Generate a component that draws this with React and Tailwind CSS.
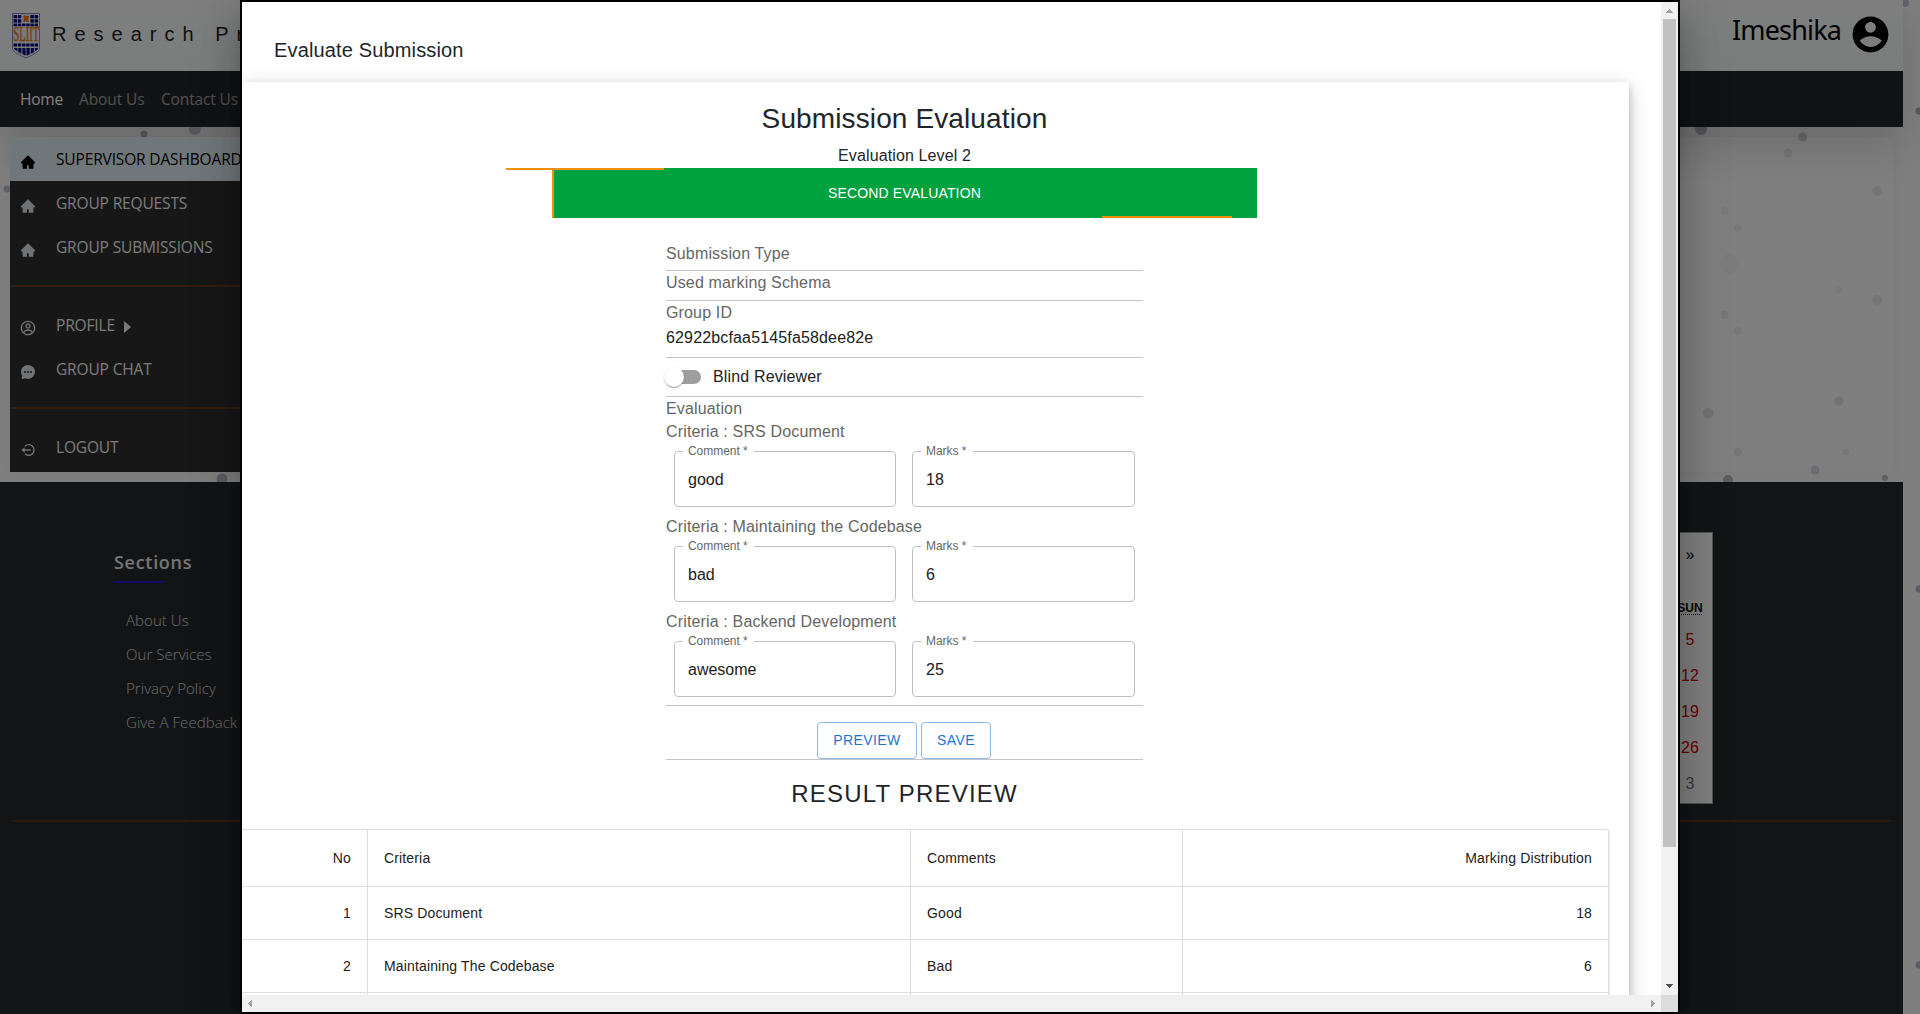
import React from 'react';
import { AiFillHome } from 'react-icons/ai';
import { IoChatbubbleEllipses } from 'react-icons/io5';
import { CgProfile } from 'react-icons/cg';
import { BiLogOutCircle } from 'react-icons/bi';
import { RiAccountCircleFill } from 'react-icons/ri';

const SEGOE = 'font-["Open_Sans",sans-serif]';

function Logo() {
  const top = [0, 1, 2];
  return (
    <svg width="28" height="46" viewBox="0 0 28 46" aria-hidden="true">
      <path d="M.5.5h27V35.5C27.500 39 20 42 14 45C8 42 .5 39 .5 35.500Z" fill="#f4f4ff" stroke="#8a8ac0" />
      {top.map((r) =>
        [0, 1, 2, 3, 4, 5].map((c) =>
          r < 2 && (c === 2 || c === 3) ? null : (
            <rect key={`${r}-${c}`} x={1.6 + c * 4.2} y={2 + r * 4.3} width="3.400" height={r === 2 ? 2.6 : 3.3} fill="#00007c" />
          )
        )
      )}
      <path d="M11 3l2-1 1 1h3v2l-1 1 1 3h-2l-1-1-2 1-1-1 1-2z" fill="#f07808" />
      <text x="2.500" y="28.500" transform="scale(0.530 1)" fill="#ee7a10" stroke="#ee7a10" strokeWidth="0.500" className="font-['Liberation_Serif',serif] text-[20px]">
        SLIIT
      </text>
      {[0, 1, 2, 3, 4, 5].map((c) => (
        <rect key={c} x={1.6 + c * 4.2} y="30.500" width="3.400" height="3" fill="#00007c" />
      ))}
      <path d="M2 35h3.400v3.300L2 36zM6.200 35h3.200v5.500l-3.200-1.600zM10.400 35h3.200v7.500l-3.200-1.500zM14.500 35h3.200v6.200l-3.200 1.500zM18.700 35h3.200v4.200l-3.200 1.600zM22.800 35H26v1.300l-3.200 2.200z" fill="#00007c" />
    </svg>
  );
}

function SideItem({ icon, label, active, children }) {
  return (
    <div className={`flex h-11 items-center ${active ? 'bg-[#e0eef4] text-black' : 'text-[#f5f5f5]'}`}>
      <span className={`mt-[5px] ml-[10px] flex w-4 justify-center text-[16px] ${active ? 'text-black' : 'text-[#e0e6ec]'}`}>{icon}</span>
      <span className="ml-5 text-[15.500px] leading-[22px] tracking-[-0.15px] whitespace-nowrap">{label}</span>
      {children}
    </div>
  );
}

function SideRule() {
  return <div className="my-4 h-[2px] bg-[#603a20]" />;
}

const DOTS = [
  [144, 134, 3.5, 0.4], [195, 129, 6, 0.28], [7, 189, 3.5, 0.3], [222, 479, 5.5, 0.35],
  [1701, 129, 6, 0.35], [1802.500, 137, 4.5, 0.22], [1788, 153, 4.5, 0.1], [1877, 191, 5, 0.1],
  [1724.500, 211, 4, 0.08], [1738, 228, 4, 0.08], [1729, 264, 10, 0.03], [1839, 290, 3.5, 0.05], [1877, 300, 5, 0.1],
  [1724.500, 315, 4, 0.09], [1738, 331, 4, 0.08], [1839, 401, 4.5, 0.12], [1708, 413, 5.5, 0.12],
  [1738, 452, 4, 0.1], [1845.500, 452, 3.5, 0.08], [1728, 480, 5, 0.35], [1815, 470, 4.5, 0.18],
  [1885, 478, 3, 0.3], [1905, 3, 4, 0.3], [1919, 111, 3.5, 0.4], [1919, 589, 3.5, 0.35], [1919, 965, 3.5, 0.35],
];

function BackgroundPage() {
  return (
    <div className={`relative flex h-[1014px] w-[1920px] overflow-hidden bg-white ${SEGOE}`}>
      <svg className="absolute inset-0" width="1920" height="1014" aria-hidden="true">
        {DOTS.map(([x, y, r, o]) => (
          <circle key={`${x}-${y}`} cx={x} cy={y} r={r} fill="#3c3c68" fillOpacity={o} />
        ))}
      </svg>
      <div className="relative flex w-[1903px] shrink-0 flex-col">
        <div className="shadow-[0_16px_48px_rgba(0,0,0,0.175)]">
          <header className="flex h-[71px] bg-linear-to-b from-[#fdfdfd] to-[#f6fafa]">
            <div className="mt-[13px] ml-3 shrink-0"><Logo /></div>
            <div className="ml-[12px] pt-[19px] font-['Liberation_Sans',sans-serif] text-[20px] leading-[30px] tracking-[8px] whitespace-nowrap text-[#212529]">
              Research Project
            </div>
            <div className="mr-[11px] ml-auto flex">
              <span className="mt-[10px] font-['Noto_Sans',sans-serif] text-[27px] leading-[40px] tracking-[-0.850px] text-black">Imeshika</span>
              <RiAccountCircleFill className="mt-[13px] ml-[8px] size-[43px] text-black" />
            </div>
          </header>
          <nav className="flex h-14 items-center bg-[#212529] pt-[2px] pl-5 text-[15.500px] text-white/55">
            <span className="w-[59px] tracking-[-0.2px] text-white">Home</span>
            <span className="w-[82px] tracking-[-0.1px]">About Us</span>
            <span className="tracking-[-0.150px]">Contact Us</span>
          </nav>
        </div>
        <main className="h-[355px] p-[10px]">
          <div className="h-[335px] shadow-[0_0_16px_rgba(0,0,0,0.06)]">
            <aside className="h-full w-[300px] bg-[#2f2f2f]">
              <SideItem active icon={<AiFillHome />} label="SUPERVISOR DASHBOARD" />
              <SideItem icon={<AiFillHome />} label="GROUP REQUESTS" />
              <SideItem icon={<AiFillHome />} label="GROUP SUBMISSIONS" />
              <SideRule />
              <SideItem icon={<CgProfile />} label="PROFILE">
                <span className="mt-[3px] ml-[9px] border-y-[6px] border-l-[7px] border-y-transparent border-l-[#f5f5f5]" />
              </SideItem>
              <SideItem icon={<IoChatbubbleEllipses />} label="GROUP CHAT" />
              <SideRule />
              <SideItem icon={<BiLogOutCircle />} label="LOGOUT" />
            </aside>
          </div>
        </main>
        <footer className="flex grow flex-col bg-[#24282b] px-3">
          <div className="flex h-[338px] justify-between">
            <div className="pt-[67px] pl-[102px]">
              <h6 className="text-[18px] leading-[26px] font-semibold tracking-[0.7px] text-white/90">Sections</h6>
              <div className="mt-[6px] h-[2px] w-[50px] bg-[#2814d2]" />
              <ul className="mt-5 ml-3 text-[15px] leading-[34px] font-light tracking-[0.050px] text-white/80">
                <li>About Us</li>
                <li>Our Services</li>
                <li>Privacy Policy</li>
                <li>Give A Feedback</li>
              </ul>
            </div>
            <div className="mt-[50px] mr-[178px] flex h-[272px] w-[350px] justify-end border border-[#a0a096] bg-white font-['Liberation_Sans',sans-serif] text-black">
              <div className="flex w-[44px] flex-col text-center text-[16px] leading-9">
                <span className="h-11 leading-11">»</span>
                <span className="mt-[13px] h-8 text-[12px] leading-9 font-bold text-[#111]">
                  <span className="-mx-1 underline decoration-dotted underline-offset-2">SUN</span>
                </span>
                <span className="text-[#d10000]">5</span>
                <span className="text-[#d10000]">12</span>
                <span className="text-[#d10000]">19</span>
                <span className="text-[#d10000]">26</span>
                <span className="text-[#757575]">3</span>
              </div>
            </div>
          </div>
          <div className="h-[2px] bg-[#5c3620]" />
        </footer>
      </div>
      <div className="absolute inset-0 bg-black/50" />
    </div>
  );
}

function Field({ label, value, notch, width }) {
  return (
    <div className={`relative h-14 rounded-[4px] border border-[#c0c0c0] pl-[13px] ${width}`}>
      <span className={`absolute top-[-8px] left-[8px] bg-white pl-[5px] text-[12px] leading-[14px] tracking-[-0.050px] whitespace-nowrap text-[#666] ${notch}`}>{label}</span>
      <span className="block pt-[16px] text-[16px] leading-[24px] text-[#212121]">{value}</span>
    </div>
  );
}

function Criterion({ name, comment, marks }) {
  return (
    <div className="pb-2">
      <p className="leading-[23px] text-[#666]">Criteria : {name}</p>
      <div className="mt-2 flex gap-4 px-2 tracking-normal">
        <Field label="Comment *" value={comment} notch="w-[71px]" width="w-[222px]" />
        <Field label="Marks *" value={marks} notch="w-[52px]" width="w-[223px]" />
      </div>
    </div>
  );
}

const ROWS = [
  ['1', 'SRS Document', 'Good', '18'],
  ['2', 'Maintaining The Codebase', 'Bad', '6'],
  ['', '', '', ''],
];

function ResultRow({ cells, height }) {
  return (
    <div className={`grid grid-cols-[126px_543px_272px_426px] border-b border-[#dedede] ${height}`}>
      {cells.map((cell, i) => (
        <div key={i} className={`flex items-center border-r border-[#dedede] px-4 ${i === 0 || i === 3 ? 'justify-end' : ''}`}>
          {cell}
        </div>
      ))}
    </div>
  );
}

function Form() {
  return (
    <div className="mx-auto w-[477px] text-[16px] tracking-[0.150px] text-[#666]">
      <div className="h-[53px] border-b border-[#c4c4c4] pt-6 leading-[23px]">Submission Type</div>
      <div className="h-[30px] border-b border-[#c4c4c4] leading-[23px]">Used marking Schema</div>
      <div className="h-[57px] border-b border-[#c4c4c4]">
        <p className="leading-[23px]">Group ID</p>
        <p className="leading-[27px] text-[#212121]">62922bcfaa5145fa58dee82e</p>
      </div>
      <div className="flex h-[39px] border-b border-[#c4c4c4] text-[#212121]">
        <div className="mt-[12px] ml-px h-[14px] w-[34px] rounded-full bg-[#9e9e9e]">
          <div className="-mt-[3px] -ml-[3px] size-5 rounded-full bg-white shadow-[0_2px_1px_-1px_rgba(0,0,0,0.2),0_1px_1px_rgba(0,0,0,0.14),0_1px_3px_rgba(0,0,0,0.12)]" />
        </div>
        <span className="ml-[12px] leading-[37px]">Blind Reviewer</span>
      </div>
      <div className="border-b border-[#c4c4c4]">
        <p className="leading-[23px]">Evaluation</p>
        <Criterion name="SRS Document" comment="good" marks="18" />
        <Criterion name="Maintaining the Codebase" comment="bad" marks="6" />
        <Criterion name="Backend Development" comment="awesome" marks="25" />
      </div>
      <div className="flex h-[54px] gap-1 border-b border-[#c4c4c4] pt-4 pl-[151px] text-[14px] tracking-[0.4px] text-[#1976d2]">
        <button className="h-[37px] w-[100px] rounded-[4px] border border-[#8cbae8]">PREVIEW</button>
        <button className="h-[37px] w-[70px] rounded-[4px] border border-[#8cbae8]">SAVE</button>
      </div>
    </div>
  );
}

function Tri({ points, fill }) {
  return (
    <svg width="17" height="17" viewBox="0 0 17 17" className="shrink-0" aria-hidden="true">
      <polygon points={points} fill={fill} shapeRendering="crispEdges" />
    </svg>
  );
}

function Dialog() {
  return (
    <div className="absolute top-0 left-[240px] flex h-[1014px] w-[1440px] flex-col border-2 border-black bg-white font-['Liberation_Sans',Arial,sans-serif] shadow-[0_11px_15px_-7px_rgba(0,0,0,0.2),0_24px_38px_3px_rgba(0,0,0,0.14),0_9px_46px_8px_rgba(0,0,0,0.12)]">
      <div className="flex h-[993px]">
        <div className="w-[1419px] shrink-0 overflow-hidden">
          <h2 className="h-20 pt-[33px] pl-8 text-[20px] leading-[30px] tracking-[0.150px] text-[#212529]">Evaluate Submission</h2>
          <div className="h-[940px] w-[1387px] shadow-[0_4px_8px_rgba(0,0,0,0.2),0_6px_20px_rgba(0,0,0,0.19)]">
            <div className="w-[1325px] text-center">
              <h1 className="pt-5 text-[28px] leading-[33px] tracking-[0.120px] text-[#212529]">Submission Evaluation</h1>
              <p className="mt-2 text-[16px] leading-[25px] tracking-[0.120px] text-[#212529]">Evaluation Level 2</p>
              <div className="relative mx-auto h-[50px] w-[705px] bg-[#00a13f] text-[14px] leading-[50px] tracking-[0.150px] text-white">
                SECOND EVALUATION
                <span className="absolute top-0 left-[-46px] h-[2px] w-[158px] bg-[#f39200]" />
                <span className="absolute top-0 left-0 h-full w-[2px] bg-[#f39200]" />
                <span className="absolute right-[25px] bottom-0 h-[2px] w-[130px] bg-[#f39200]" />
              </div>
              <div className="text-left"><Form /></div>
              <h3 className="mt-[17px] mb-[19px] text-[24px] leading-[33px] tracking-[1.200px] text-[#212529]">RESULT PREVIEW</h3>
            </div>
            <div className="w-[1367px] rounded-tr-[4px] border-t border-[#dedede] text-[14px] tracking-[0.150px] text-[#212121] shadow-[0_1px_3px_rgba(0,0,0,0.16)]">
              <ResultRow height="h-[57px]" cells={['No', 'Criteria', 'Comments', 'Marking Distribution']} />
              {ROWS.map((r) => (
                <ResultRow key={r[0]} height="h-[53px]" cells={r} />
              ))}
            </div>
          </div>
        </div>
        <div className="flex w-[17px] flex-col bg-[#f1f1f1]">
          <Tri points="5,11 12,11 8.5,7" fill="#a3a3a3" />
          <div className="mx-[2px] h-[828px] bg-[#c1c1c1]" />
          <div className="grow" />
          <Tri points="5,6 12,6 8.5,10" fill="#505050" />
        </div>
      </div>
      <div className="flex h-[17px] bg-[#f1f1f1]">
        <Tri points="10,5 10,12 6,8.5" fill="#a3a3a3" />
        <div className="grow" />
        <Tri points="7,5 7,12 11,8.5" fill="#a3a3a3" />
        <div className="w-[17px] bg-[#dcdcdc]" />
      </div>
    </div>
  );
}

export default function App() {
  return (
    <div className="relative h-[1014px] w-[1920px] overflow-hidden">
      <BackgroundPage />
      <Dialog />
    </div>
  );
}
